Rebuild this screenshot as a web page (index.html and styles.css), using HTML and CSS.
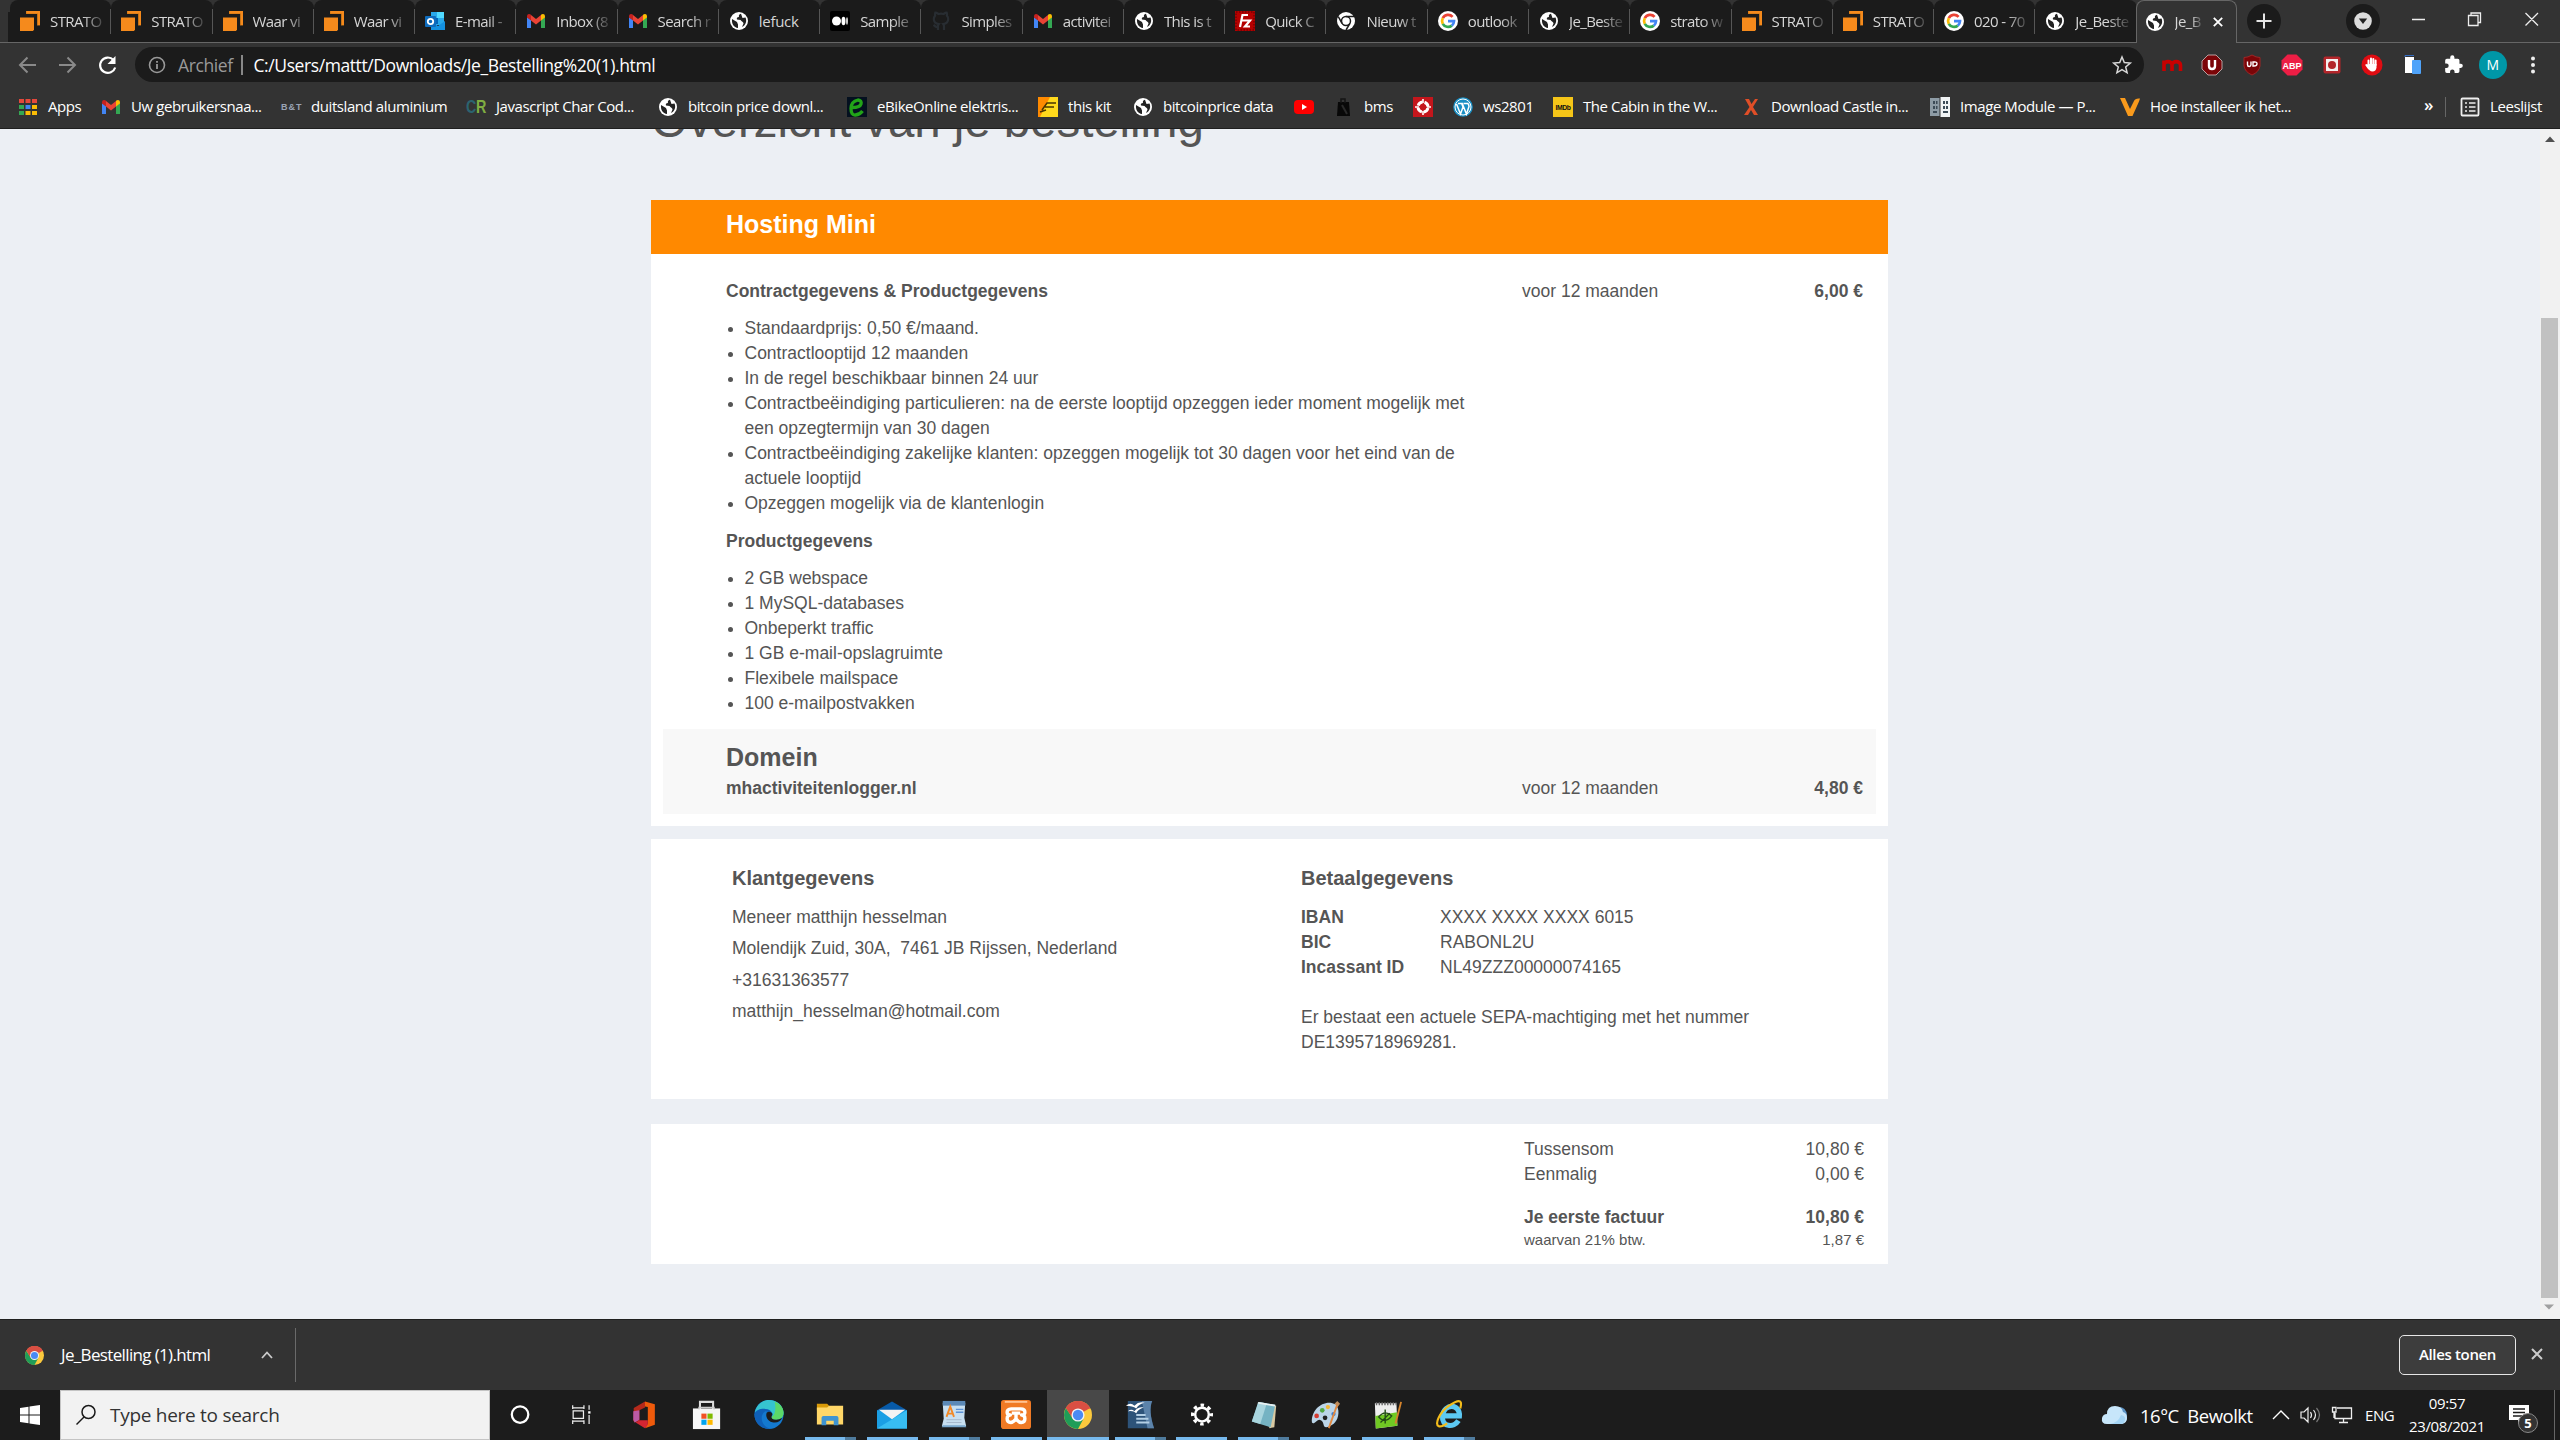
FILE: index.html
```html
<!DOCTYPE html>
<html lang="nl">
<head>
<meta charset="utf-8">
<title>Je_Bestelling (1).html</title>
<link rel="stylesheet" href="styles.css">
</head>
<body>
<svg class="defs" aria-hidden="true">
  <symbol id="strato" viewBox="0 0 20 20"><path d="M6 0H20V14.500H17V3H6z" fill="#c97414"/><path d="M6.500 0H20V14H18V2.500H6.500z" fill="#f58a1c"/><path d="M0 6.500H14V18.500L13 20H0z" fill="#f58a1c"/></symbol>
  <symbol id="gmail" viewBox="0 0 20 20"><path d="M1 6v11h4V9z" fill="#4285f4"/><path d="M15 9v8h4V6z" fill="#34a853"/><path d="M1 5.500c0-3 2.500-3 4-1.800V9.500L1 6.500z" fill="#c5221f"/><path d="M5 4l5 4 5-4v5.600l-5 3.900-5-3.900z" fill="#ea4335"/><path d="M15 3.700c1.500-1.200 4-1.200 4 1.800v1l-4 3z" fill="#fbbc04"/></symbol>
  <symbol id="globe" viewBox="0 0 20 20"><circle cx="10" cy="10" r="9" fill="#fff"/><path d="M3 8l5 3 1 2.500v3.500c-4-.5-6.500-4-6-9zM12 2.700c-2 .5-2.500 2-2 3.300-2 0-2.500 1-2 2.500l3.500.5c1 2 3 1.500 3 3.500L13 16c4-2 5-6 3.500-9.500L13.500 7z" fill="#222"/></symbol>
  <symbol id="google" viewBox="0 0 20 20"><circle cx="10" cy="10" r="10" fill="#fff"/><g fill="none" stroke-width="2.700"><path d="M14.600 5.800A6 6 0 0 0 4.800 7.200" stroke="#ea4335"/><path d="M4.800 7.200a6 6 0 0 0 0 5.600" stroke="#fbbc05"/><path d="M4.800 12.800a6 6 0 0 0 9 1.800" stroke="#34a853"/><path d="M13.800 14.600A6 6 0 0 0 16 10.200H10" stroke="#4285f4"/></g></symbol>
  <symbol id="outlook" viewBox="0 0 20 20"><rect x="6" y="1" width="13" height="13" fill="#28a8ea"/><path d="M12 1h7v6h-7z" fill="#50d9ff"/><path d="M6 7h7v6H6z" fill="#0364b8"/><path d="M6 10l7 5 7-5v9H6z" fill="#1490df"/><rect y="5" width="11" height="11" rx="1" fill="#0f6cbd"/><circle cx="5.500" cy="10.500" r="2.700" fill="none" stroke="#fff" stroke-width="1.800"/></symbol>
  <symbol id="medium" viewBox="0 0 20 20"><rect width="20" height="20" rx="2" fill="#000"/><circle cx="6.500" cy="10" r="4.500" fill="#fff"/><ellipse cx="13.500" cy="10" rx="2" ry="4.300" fill="#fff"/><ellipse cx="17" cy="10" rx=".8" ry="3.700" fill="#fff"/></symbol>
  <symbol id="github" viewBox="0 0 20 20"><path d="M7 19v-3c-3 .5-3.500-1.500-4.500-2.200M13 19v-4c0-1-.4-1.500-.8-2 3-.4 5-1.500 5-5 0-1.300-.5-2.500-1.300-3.300.2-1 .2-2-.2-3-1.200 0-2.300.7-3.200 1.300a10 10 0 0 0-5 0C6.600 2.400 5.500 1.700 4.300 1.700c-.4 1-.4 2-.2 3A5 5 0 0 0 2.800 8c0 3.500 2 4.600 5 5-.4.500-.8 1-.8 2v4" fill="none" stroke="#282d32" stroke-width="2.200"/></symbol>
  <symbol id="filezilla" viewBox="0 0 20 20"><rect width="20" height="20" fill="#b40000"/><rect x="1" y="1" width="18" height="18" fill="none" stroke="#700" stroke-width="1.500" stroke-dasharray="1.500 1.500"/><path d="M5 16L7.500 4H13M6 9.500h5M10.500 9.500H15L10 15.500h5" fill="none" stroke="#fff" stroke-width="2.200"/></symbol>
  <symbol id="chromemono" viewBox="0 0 20 20"><circle cx="10" cy="10" r="9" fill="#fff"/><circle cx="10" cy="10" r="4.500" fill="none" stroke="#1c1c1c" stroke-width="1.500"/><path d="M10 5.500h8M6 12.300L2.300 5.700M14 12.300L10 19" stroke="#1c1c1c" stroke-width="1.500"/></symbol>
  <symbol id="chrome" viewBox="0 0 20 20"><circle cx="10" cy="10" r="10" fill="#fbc93d"/><path d="M10 10L1.340 5A10 10 0 0 1 18.660 5z" fill="#d94f43"/><path d="M1.340 5A10 10 0 0 0 10 20L14 12.500 6 12z" fill="#1f9d58"/><path d="M10 5.300H18.800A10 10 0 0 0 1.340 5L6 12.300z" fill="#d94f43"/><circle cx="10" cy="10" r="4.700" fill="#f4f4f4"/><circle cx="10" cy="10" r="3.700" fill="#4a8af4"/></symbol>
</svg>

<header class="browser">
  <div class="tabs">
    <div class="tab"><svg><use href="#strato"/></svg><span>STRATO</span></div>
    <div class="tab"><svg><use href="#strato"/></svg><span>STRATO</span></div>
    <div class="tab"><svg><use href="#strato"/></svg><span>Waar vi</span></div>
    <div class="tab"><svg><use href="#strato"/></svg><span>Waar vi</span></div>
    <div class="tab"><svg><use href="#outlook"/></svg><span>E-mail -</span></div>
    <div class="tab"><svg><use href="#gmail"/></svg><span>Inbox (8</span></div>
    <div class="tab"><svg><use href="#gmail"/></svg><span>Search r</span></div>
    <div class="tab whole"><svg><use href="#globe"/></svg><span>lefuck</span></div>
    <div class="tab"><svg><use href="#medium"/></svg><span>Sample</span></div>
    <div class="tab"><svg><use href="#github"/></svg><span>Simples</span></div>
    <div class="tab"><svg><use href="#gmail"/></svg><span>activitei</span></div>
    <div class="tab"><svg><use href="#globe"/></svg><span>This is t</span></div>
    <div class="tab"><svg><use href="#filezilla"/></svg><span>Quick C</span></div>
    <div class="tab"><svg><use href="#chromemono"/></svg><span>Nieuw t</span></div>
    <div class="tab"><svg><use href="#google"/></svg><span>outlook</span></div>
    <div class="tab"><svg><use href="#globe"/></svg><span>Je_Beste</span></div>
    <div class="tab"><svg><use href="#google"/></svg><span>strato w</span></div>
    <div class="tab"><svg><use href="#strato"/></svg><span>STRATO</span></div>
    <div class="tab"><svg><use href="#strato"/></svg><span>STRATO</span></div>
    <div class="tab"><svg><use href="#google"/></svg><span>020 - 70</span></div>
    <div class="tab"><svg><use href="#globe"/></svg><span>Je_Beste</span></div>
    <div class="tab active"><svg><use href="#globe"/></svg><span>Je_B</span><svg class="tab-close" viewBox="0 0 10 10"><path d="M.8.8l8.400 8.400M9.200.8L.8 9.200" stroke="#fff" stroke-width="1.800"/></svg></div>
    <div class="strip-end">
      <svg class="round" viewBox="0 0 34 34"><circle cx="17" cy="17" r="17" fill="#1b1b1b"/><path d="M17 9.500v15M9.500 17h15" stroke="#e6e6e6" stroke-width="2"/></svg>
      <svg class="round menu-round" viewBox="0 0 34 34"><circle cx="17" cy="17" r="17" fill="#1b1b1b"/><circle cx="17" cy="17" r="8.800" fill="#dcdcdc"/><path d="M12.800 14.500h8.400L17 20z" fill="#222"/></svg>
      <svg class="wincontrols" viewBox="0 0 130 20"><g fill="none" stroke="#eee" stroke-width="1.300"><path d="M0 9.500h13M56.500 5.500h9.500v10h-9.500zM59 5.500V3h9.500v9.500H66M113.500 3l12.500 12.500M126 3l-12.500 12.500"/></g></svg>
    </div>
  </div>

  <div class="toolbar">
    <svg class="nav" viewBox="0 0 110 24"><g fill="none" stroke="#8a8a8a" stroke-width="2"><path d="M18 12H2M9.500 4.500L2 12l7.500 7.500M41 12h16M49.500 4.500L57 12l-7.500 7.500"/><path d="M95.500 7A7.700 7.700 0 1 0 97.200 14.500" stroke="#fff" stroke-width="2.200"/><path d="M97.500 3v8h-8z" fill="#fff" stroke="none"/></g></svg>
    <div class="omnibox">
      <svg class="info" viewBox="0 0 18 18"><circle cx="9" cy="9" r="7.500" fill="none" stroke="#999" stroke-width="1.600"/><path d="M9 8v5M9 5v1.700" stroke="#999" stroke-width="1.800"/></svg>
      <span class="scheme">Archief</span><i></i><span class="url">C:/Users/mattt/Downloads/Je_Bestelling%20(1).html</span>
      <svg class="star" viewBox="0 0 20 20"><path d="M10 2l2.300 5.500 6 .5-4.600 3.900 1.400 5.900L10 14.700l-5.100 3.100 1.400-5.900L1.700 8l6-.5z" fill="none" stroke="#d8d8d8" stroke-width="1.500"/></svg>
    </div>
    <div class="extensions">
      <svg viewBox="0 0 24 24"><path d="M4 18V7.500M4 12c0-4.500 8-4.500 8 0v6M12 12c0-4.500 8.500-4.500 8.500 0v6" fill="none" stroke="#c80000" stroke-width="3.600"/></svg>
      <svg viewBox="0 0 24 24"><path d="M8 2h8l6 6v8l-6 6H8l-6-6V8z" fill="#7b0508" stroke="#b8a0a0"/><path d="M9 7v6q0 3 3 3t3-3V7" fill="none" stroke="#fff" stroke-width="2.400"/></svg>
      <svg viewBox="0 0 24 24"><path d="M12 2q4 2.500 8 2.500V13q-1 6-8 9-7-3-8-9V4.500Q8 4.500 12 2z" fill="#7b0508" stroke="#a02525"/><path d="M7.500 8.500v3.200q0 1.800 1.700 1.800t1.800-1.800V8.500M13 9v4h1q3 0 3-2.200T14 9z" fill="none" stroke="#fff" stroke-width="1.400"/></svg>
      <svg viewBox="0 0 24 24"><path d="M7.500 1.500h9l6 6v9l-6 6h-9l-6-6v-9z" fill="#ed1e45"/><text x="12" y="15.500" text-anchor="middle" class="abp">ABP</text></svg>
      <svg viewBox="0 0 24 24"><rect x="3.500" y="3.500" width="17" height="17" rx="2" fill="#b3262b"/><rect x="6" y="6" width="12" height="12" fill="#f5f0f0"/><circle cx="12" cy="12" r="4" fill="#b3262b"/></svg>
      <svg viewBox="0 0 24 24"><circle cx="12" cy="12" r="10.500" fill="#e00c12"/><path d="M8.500 12V7.500M11 11V5.500M13.300 11V6M15.600 12V7.500M6.300 12l2.500 3.500" stroke="#fff" stroke-width="2" stroke-linecap="round"/><path d="M7.500 11h9v3.500q-.5 4-4 4t-5-5z" fill="#fff"/></svg>
      <svg viewBox="0 0 24 24"><path d="M4 4h9v16H4z" fill="#fff"/><path d="M4 4V2.500h9" stroke="#356cc0" fill="none"/><rect x="11" y="7" width="9" height="14" rx="1" fill="#4fa3fa"/></svg>
      <svg viewBox="0 0 24 24"><path d="M20.500 11H19V7a2 2 0 0 0-2-2h-4V3.500a2.500 2.500 0 0 0-5 0V5H4a2 2 0 0 0-2 2v3.800h1.500a2.700 2.700 0 0 1 0 5.400H2V20a2 2 0 0 0 2 2h3.800v-1.500a2.700 2.700 0 0 1 5.400 0V22H17a2 2 0 0 0 2-2v-4h1.500a2.500 2.500 0 0 0 0-5z" fill="#fff" transform="translate(2.500 1.500) scale(.84)"/></svg>
      <b class="avatar">M</b>
      <svg viewBox="0 0 24 24"><g fill="#eee"><circle cx="12" cy="5.500" r="2"/><circle cx="12" cy="12" r="2"/><circle cx="12" cy="18.500" r="2"/></g></svg>
    </div>
  </div>

  <nav class="bookmarks">
    <a class="w33"><svg viewBox="0 0 20 20"><g><path d="M1 2h5v4H1zM7.500 2h5v4h-5zM14 2h5v4h-5z" fill="#e5483b"/><path d="M1 8h5v4H1z" fill="#34a853"/><path d="M7.500 8h5v4h-5z" fill="#4285f4"/><path d="M14 8h5v4h-5zM14 14h5v4h-5zM7.500 14h5v4h-5z" fill="#fbbc05"/><path d="M1 14h5v4H1z" fill="#34a853"/></g></svg><span>Apps</span></a>
    <a class="w130"><svg><use href="#gmail"/></svg><span>Uw gebruikersnaa...</span></a>
    <a class="w135"><svg viewBox="0 0 20 20"><text x="0" y="13" class="bt" textLength="20">B&amp;T</text></svg><span>duitsland aluminium</span></a>
    <a class="w142"><svg viewBox="0 0 20 20"><text x="0" y="16" class="cr" textLength="20" lengthAdjust="spacingAndGlyphs"><tspan fill="#2b6470">C</tspan><tspan fill="#7fae42">R</tspan></text></svg><span>Javascript Char Cod...</span></a>
    <a class="w139"><svg><use href="#globe"/></svg><span>bitcoin price downl...</span></a>
    <a class="w141"><svg viewBox="0 0 20 20"><rect width="20" height="20" fill="#04101f"/><path d="M5 10.500q8 0 9-3.500t-3-4Q4 4.500 4 11.500t4.500 6.500 7-4" fill="none" stroke="#22a318" stroke-width="3.300"/></svg><span>eBikeOnline elektris...</span></a>
    <a class="w45"><svg viewBox="0 0 20 20"><rect width="20" height="20" fill="#ff8a00"/><path d="M2 20L12 0h8v20z" fill="#ffd91c"/><path d="M4 13l5-7h9M7 10h9M2 15l6-2" fill="none" stroke="#4a3500" stroke-width="1.500"/></svg><span>this kit</span></a>
    <a class="w111"><svg><use href="#globe"/></svg><span>bitcoinprice data</span></a>
    <a><svg viewBox="0 0 20 20"><rect y="3" width="20" height="14" rx="4" fill="#f00"/><path d="M8 7l5 3-5 3z" fill="#fff"/></svg></a>
    <a class="w29"><svg viewBox="0 0 20 20"><path d="M4 5h11l1 14H3z" fill="#080808"/><path d="M7 6V2h4v4" fill="none" stroke="#151515" stroke-width="1.500"/><path d="M8 8l5 9" stroke="#292929" stroke-width="2"/></svg><span>bms</span></a>
    <a><svg viewBox="0 0 20 20"><rect width="20" height="20" fill="#c4161c"/><circle cx="10" cy="10" r="5" fill="none" stroke="#fff" stroke-width="3" stroke-dasharray="5.800 2.050" stroke-dashoffset="-1"/><path d="M10 2v4M10 14v4M2 10h4M14 10h4" stroke="#fff" stroke-width="1.600"/></svg></a>
    <a class="w50"><svg viewBox="0 0 20 20"><circle cx="10" cy="10" r="9.800" fill="#1b8fc4"/><circle cx="10" cy="10" r="8" fill="none" stroke="#fff"/><path d="M3.500 7l4 10 2.500-7-1.500-4M5 6.500h4.500M9 6l4.500 11L16 9.500q0-2-1.500-3.500M10.500 6.500H15" fill="none" stroke="#fff" stroke-width="1.500"/></svg><span>ws2801</span></a>
    <a class="w138"><svg viewBox="0 0 20 20"><rect width="20" height="20" fill="#f5c518"/><text x="2.500" y="13" class="imdb" textLength="15" lengthAdjust="spacingAndGlyphs">IMDb</text></svg><span>The Cabin in the W...</span></a>
    <a class="w139"><svg viewBox="0 0 20 20"><path d="M4 2h4l2.500 5L14 2h3l-5 8 5 8h-4l-3-5-3 5H3l5.500-8z" fill="#e04e27"/></svg><span>Download Castle in...</span></a>
    <a class="w140"><svg viewBox="0 0 20 20"><path d="M0 1h9.500v18H0z" fill="#8d9ba5"/><path d="M10.500 0H20v20h-9.500z" fill="#f0f3f4"/><path d="M3 4h2v3H3zM3 9h2v3H3zM6 4h1.500v3H6zM6 9h1.500v3H6zM13 4h2v3h-2zM16 4h2v3h-2zM13 9h2v3h-2zM16 9h2v3h-2zM3 14h4v2H3zM13 14h5v2h-5z" fill="#3c4b57"/></svg><span>Image Module — P...</span></a>
    <a class="w143"><svg viewBox="0 0 20 20"><path d="M0 1h5l5 11 4-8q1-3 6-2.500l-1 3L12.500 19H8z" fill="#f99a1c"/></svg><span>Hoe installeer ik het...</span></a>
    <div class="reading"><b>»</b><i></i><svg viewBox="0 0 20 20"><rect x="1.500" y="1.500" width="17" height="17" rx="1" fill="none" stroke="#eee" stroke-width="1.800"/><path d="M5 6h2M9 6h6.500M5 10h2M9 10h6.500M5 14h2M9 14h6.500" stroke="#eee" stroke-width="1.600"/></svg><span>Leeslijst</span></div>
  </nav>
</header>

<div class="viewport">
  <main>
    <h1>Overzicht van je bestelling</h1>
    <section class="card product">
      <h2>Hosting Mini</h2>
      <div class="line">
        <div class="details">
          <h4>Contractgegevens &amp; Productgegevens</h4>
          <ul>
            <li>Standaardprijs: 0,50 €/maand.</li>
            <li>Contractlooptijd 12 maanden</li>
            <li>In de regel beschikbaar binnen 24 uur</li>
            <li>Contractbeëindiging particulieren: na de eerste looptijd opzeggen ieder moment mogelijk met een opzegtermijn van 30 dagen</li>
            <li>Contractbeëindiging zakelijke klanten: opzeggen mogelijk tot 30 dagen voor het eind van de actuele looptijd</li>
            <li>Opzeggen mogelijk via de klantenlogin</li>
          </ul>
          <h4>Productgegevens</h4>
          <ul>
            <li>2 GB webspace</li>
            <li>1 MySQL-databases</li>
            <li>Onbeperkt traffic</li>
            <li>1 GB e-mail-opslagruimte</li>
            <li>Flexibele mailspace</li>
            <li>100 e-mailpostvakken</li>
          </ul>
        </div>
        <span>voor 12 maanden</span>
        <b>6,00 €</b>
      </div>
      <div class="domain">
        <h3>Domein</h3>
        <div class="line"><b class="name">mhactiviteitenlogger.nl</b><span>voor 12 maanden</span><b>4,80 €</b></div>
      </div>
    </section>

    <section class="card customer">
      <div class="person">
        <h3>Klantgegevens</h3>
        <p>Meneer matthijn hesselman</p>
        <p>Molendijk Zuid, 30A,&nbsp; 7461 JB Rijssen, Nederland</p>
        <p>+31631363577</p>
        <p>matthijn_hesselman@hotmail.com</p>
      </div>
      <div class="payment">
        <h3>Betaalgegevens</h3>
        <dl>
          <dt>IBAN</dt><dd>XXXX XXXX XXXX 6015</dd>
          <dt>BIC</dt><dd>RABONL2U</dd>
          <dt>Incassant ID</dt><dd>NL49ZZZ00000074165</dd>
        </dl>
        <p>Er bestaat een actuele SEPA-machtiging met het nummer DE1395718969281.</p>
      </div>
    </section>

    <section class="card totals">
      <div><span>Tussensom</span><span>10,80 €</span></div>
      <div><span>Eenmalig</span><span>0,00 €</span></div>
      <div class="total"><b>Je eerste factuur</b><b>10,80 €</b></div>
      <div class="vat"><span>waarvan 21% btw.</span><span>1,87 €</span></div>
    </section>
  </main>
  <div class="scrollbar">
    <svg viewBox="0 0 20 20"><path d="M5 13h10l-5-5.500z" fill="#505050"/></svg>
    <div class="thumb"></div>
    <svg viewBox="0 0 20 20"><path d="M4 6.500h10L9 11.500z" fill="#a0a0a0"/></svg>
  </div>
</div>

<footer class="shelf">
  <div class="download">
    <svg class="file"><use href="#chrome"/></svg>
    <span>Je_Bestelling (1).html</span>
    <svg class="chev" viewBox="0 0 12 8"><path d="M1 7l5-5.500L11 7" fill="none" stroke="#ccc" stroke-width="1.800"/></svg>
  </div>
  <button>Alles tonen</button>
  <svg class="close" viewBox="0 0 12 12"><path d="M1 1l10 10M11 1L1 11" stroke="#ccc" stroke-width="2"/></svg>
</footer>

<div class="taskbar">
  <svg class="start" viewBox="0 0 20 20"><path d="M0 3l8.500-1.300v7.800H0zM9.500 1.500L20 0v9.500H9.500zM0 10.500h8.500v7.800L0 17zM9.500 10.500H20V20L9.500 18.500z" fill="#fff"/></svg>
  <div class="search">
    <svg viewBox="0 0 22 22"><circle cx="13.500" cy="8" r="6.500" fill="none" stroke="#1a1a1a" stroke-width="1.500"/><path d="M9 13L1.500 20.500" stroke="#1a1a1a" stroke-width="1.500"/></svg>
    <span>Type here to search</span>
  </div>
  <div class="apps">
    <div><svg viewBox="0 0 32 32"><circle cx="15" cy="15.500" r="8.800" fill="none" stroke="#fff" stroke-width="2.400"/></svg></div>
    <div><svg viewBox="0 0 32 32"><path d="M5 9.500V5.500M5 8.500h12M17 9.500V5.500M5.500 11.500h11v8h-11zM5 25.500v-4M5 22.500h12M17 25.500v-4M22.500 5.500v5M22.500 16v9.500" fill="none" stroke="#eee" stroke-width="1.300"/><path d="M21.500 12h2.500v2.500h-2.500z" fill="#fff"/></svg></div>
    <div><svg viewBox="0 0 32 32"><path d="M4 8.500L16 1.500v6.500l-6 3v11L5 24l-1.500-2z" fill="#b5291b"/><path d="M3.500 12v9l1.500 3 5-3V11z" fill="#bb5aa5"/><path d="M16 1.500L26.500 4.500v22L16 30l3-5V7.500l-3-.5z" fill="#ee5a0b"/><path d="M6 24l4-2.500h9V26L16 30z" fill="#d42532"/></svg></div>
    <div><svg viewBox="0 0 32 32"><path d="M8.500 9.500V2h14v7.500" fill="none" stroke="#ddd" stroke-width="2.200"/><path d="M1 9h29v22H1z" fill="#f6f6f6"/><path d="M7.500 10V8h16v2" fill="none" stroke="#ccc" stroke-width="1.500"/><path d="M10 14.500h5.500V20H10z" fill="#f25022"/><path d="M16.500 14.500H22V20h-5.500z" fill="#7fba00"/><path d="M10 21h5.500v5.500H10z" fill="#00a4ef"/><path d="M16.500 21H22v5.500h-5.500z" fill="#ffb900"/></svg></div>
    <div><svg viewBox="0 0 32 32"><circle cx="16" cy="15.500" r="15.500" fill="#1479cf"/><path d="M1 13C2.500 5 9 0 16 0c9 0 15.500 6.500 15.500 13.500 0 5.500-4 7.500-8 7.500-6 0-5-2.500-4-4 1-3.500-2-7.500-7.500-7.500C7 9.500 3 10 1 13z" fill="#36c4d0"/><path d="M22 1.500c6 2.500 9.500 7 9.500 12 0 5.500-4 7.500-8 7.500-4 0-5.500-1.500-4.500-3.500 3-1 5-7 3-16z" fill="#5bd868"/><path d="M12 12c-7 5-4 17 6.500 18.700C8 32 .5 24 .5 15.500 2 11 7 9 12 9.500c4 .3 6.500 2.500 7.500 5-2-1.500-5-2.500-7.500-2.500z" fill="#0f60b8"/><path d="M13.500 13.500c2-2 5-1 6 1 .3 1-.2 2-.8 2.800-.5 2.200 1 3.700 4.800 3.700 2.500 0 4.500-.7 6.500-2-1.500 4-6 6-10.500 4.700-5-1.500-7.500-6.200-6-10.200z" fill="#1c1c1c"/></svg></div>
    <div class="open many"><svg viewBox="0 0 32 32"><path d="M2 4h11l2 2v5H2z" fill="#d99a08"/><path d="M2 8h11l2-2h15v20H2z" fill="#ffd768"/><path d="M7 27V19q0-2 2-2h14q2 0 2 2v8h-5v-5h-8v5z" fill="#3f94d1"/></svg></div>
    <div class="open"><svg viewBox="0 0 32 32"><path d="M0 11L16 1.500 32 11v3H0z" fill="#075aa8"/><path d="M0 11h32v19.500H0z" fill="#1b9fe4"/><path d="M2 10.500h28L16 20.500z" fill="#f3f3f3"/><path d="M0 30.500L32 11v19.500z" fill="#38bdf2"/></svg></div>
    <div class="open many"><svg viewBox="0 0 32 32"><path d="M4 3h24l-1 16 2 9H3l2-8z" fill="#c7dff1"/><path d="M4 1h24v5H4z" fill="#5b89b7"/><path d="M3 29h26l-1-2H4z" fill="#78a7cd"/><path d="M8 18l4-11 4 11M9.500 14.500h5" fill="none" stroke="#f28927" stroke-width="2"/><path d="M18 10h8M18 13h8" stroke="#5c92d6" stroke-width="1.500"/><path d="M8 21h16M8 24h16" stroke="#a5b9cc"/></svg></div>
    <div class="open"><svg viewBox="0 0 32 32"><rect width="32" height="31" rx="3" fill="#f07a25"/><path d="M4 1h24v2H4z" fill="#ffc291"/><path d="M11 9.500h10q4.500 0 4.500 3.500T22 16q3.500 0 3.500 4t-4 4q-2.500 0-5.500-4-3 4-5.500 4-4 0-4-4t3.500-4q-3.500 0-3.500-3T11 9.500zM11.500 14h9M16 14v6" fill="none" stroke="#fff" stroke-width="3.600" stroke-linejoin="round"/></svg></div>
    <div class="open current"><svg class="big-chrome"><use href="#chrome"/></svg></div>
    <div class="open many"><svg viewBox="0 0 32 32"><path d="M3 1h26c-3 7-2 17 2 29H3z" fill="#2d5379"/><path d="M18 1h11c-3 7-2 17 2 29h-7z" fill="#5c83aa"/><path d="M1 6q5-4 9 0 5-5 11-3-6 1-9 6-4-3-11-3zM3 12q4-3 7 0 4-5 10-4-6 2-8 6-3-3-9-2z" fill="#fff"/><path d="M12 16h10M12 20h13M12 24h14" stroke="#b3cfe5" stroke-width="2"/></svg></div>
    <div class="open"><svg viewBox="0 0 32 32"><circle cx="16" cy="15.500" r="7.300" fill="none" stroke="#fff" stroke-width="2.600"/><circle cx="16" cy="15.500" r="10" fill="none" stroke="#fff" stroke-width="3.500" stroke-dasharray="3.700 4.154" stroke-dashoffset="1.850"/></svg></div>
    <div class="open many"><svg viewBox="0 0 32 32"><path d="M9 3l20 3-2 23-5 1z" fill="#d8c9a2"/><path d="M10 2l18 3-5 24L3 23z" fill="#75b3c3"/><path d="M10 2l9 1.500-7 22L3 23z" fill="#a9d5de"/><path d="M10 2l18 3v2L10 4z" fill="#e9f1f2"/></svg></div>
    <div class="open"><svg viewBox="0 0 32 32"><path d="M24 5l4-4 3 3-3 4z" fill="#bd8c5d"/><path d="M1 24C0 12 10 2 21 3c8 1 10 9 7 17-3 7-12 11-14 8-1-3-1-6-5-7-3 0-6 6-8 3z" fill="#bbd5e8"/><circle cx="12" cy="11" r="2.500" fill="#53a943"/><circle cx="18" cy="7.500" r="2.300" fill="#f1b738"/><circle cx="6" cy="17" r="2.500" fill="#d43c32"/><circle cx="15" cy="19" r="2.500" fill="#222"/><circle cx="24" cy="15" r="2.300" fill="#357dd3"/><path d="M28 5l-9 25" stroke="#e08841" stroke-width="2"/></svg></div>
    <div class="open"><svg viewBox="0 0 32 32"><path d="M2 3.500h23l1 24-23 3z" fill="#eee"/><path d="M2.500 17l23-4 .5 14.500-23 3z" fill="#70c923"/><path d="M3 4h22" stroke="#666" stroke-width="3" stroke-dasharray="1.500 1.500"/><path d="M6 18q7-8 14-1-7 9-14 1zM13 10v15M8 24l10-10" fill="none" stroke="#244d16" stroke-width="1.500"/><path d="M30 2l-6 23" stroke="#d5832c" stroke-width="2"/></svg></div>
    <div class="open many"><svg viewBox="0 0 32 32"><path d="M8 17h18c1-13-16-14-18 0-1 12 12 13 17 5" fill="none" stroke="#5cc9f3" stroke-width="5.500"/><path d="M27 9C30-2 24 0 15 6 5 13-1 26 4 28c3 1 6-1 9-3" fill="none" stroke="#f3bc1b" stroke-width="2.300"/></svg></div>
  </div>
  <div class="tray">
    <svg class="cloud" viewBox="0 0 28 20"><path d="M16 2q9-1 10 8 1 8-6 8z" fill="#5d94c6"/><path d="M6 19q-6 0-5-6 1-4 5-4 0-8 8-8 7 0 8 6 4 1 4 6t-5 6z" fill="#c7e6fa"/><path d="M9 19q8-1 11-9 5 1 4 5t-4 4z" fill="#a5d5f5"/></svg>
    <span class="weather">16°C&nbsp; Bewolkt</span>
    <svg class="up" viewBox="0 0 18 10"><path d="M1 9l8-8 8 8" fill="none" stroke="#fff" stroke-width="1.400"/></svg>
    <svg class="speaker" viewBox="0 0 22 18"><path d="M1 6h3l4-4v14l-4-4H1zM10.500 6q2 3 0 6M13.500 4q4 5 0 10" fill="none" stroke="#eee" stroke-width="1.200"/><path d="M16.500 2q6 7 0 14" fill="none" stroke="#777" stroke-width="1.200"/></svg>
    <svg class="net" viewBox="0 0 22 18"><path d="M6 2h14.500v10.500H4V7M8 16.500h9M12.500 12.500v4M1.500 1.500H5V6H1.500zM3 6v6" fill="none" stroke="#eee" stroke-width="1.300"/></svg>
    <span class="lang">ENG</span>
    <div class="clock"><span>09:57</span><span>23/08/2021</span></div>
    <div class="notes"><svg viewBox="0 0 20 20"><path d="M0 0h20v15h-7l-4 4v-4H0z" fill="#fff"/><path d="M4 4h12M4 7.500h12M4 11h9" stroke="#1c1c1c" stroke-width="1.300"/></svg><b>5</b></div>
    <i></i>
  </div>
</div>
</body>
</html>
```
FILE: styles.css
```css
* { box-sizing: border-box; }
body { margin: 0; width: 2560px; height: 1440px; overflow: hidden; display: flex; flex-direction: column; font-family: "Open Sans", "Noto Sans", sans-serif; background: #333; color: #fff; }
.defs { position: absolute; width: 0; height: 0; }
svg { display: block; flex: none; overflow: visible; }

/* browser chrome */
.browser { height: 129px; flex: none; border-bottom: 1px solid #1f1f1f; }
.tabs { height: 43px; padding-left: 10px; display: flex; background: linear-gradient(#333 12px, #1b1b1b 12px) 8px 0 / 2128px 100% no-repeat, #333; border-bottom: 1px solid #666; }
.tab { width: 101.280px; flex: none; height: 42px; padding-left: 10px; display: flex; align-items: center; background: linear-gradient(#565656, #565656) 100% 9px / 1px 25px no-repeat, #1b1b1b; border-radius: 8px 8px 0 0; }
.tab svg { width: 20px; height: 20px; }
.tab span { width: 54px; margin-left: 10px; padding-bottom: 1px; overflow: hidden; white-space: nowrap; font-size: 15px; letter-spacing: -.6px; color: #d6d6d6; -webkit-mask-image: linear-gradient(90deg, #000 60%, rgba(0,0,0,.15)); mask-image: linear-gradient(90deg, #000 60%, rgba(0,0,0,.15)); }
.tab.whole span { -webkit-mask-image: none; mask-image: none; letter-spacing: -.3px; }
.tab.active { width: 101px; height: 43px; margin-left: -1px; background: #333; border: 1px solid #666; border-bottom: 0; padding: 0 0 1px 8px; }
.tab.active span { width: 27px; }
.tab .tab-close { width: 10px; height: 10px; margin-left: 11px; }
.strip-end { flex: 1; display: flex; align-items: center; padding-left: 10px; }
.round { width: 34px; height: 34px; }
.menu-round { margin-left: 65px; }
.wincontrols { width: 130px; height: 20px; margin: -3px 0 0 32px; }

.toolbar { height: 43px; display: flex; align-items: center; padding-left: 18px; }
.nav { width: 110px; height: 24px; }
.omnibox { margin-left: 7px; width: 2009px; height: 35px; border-radius: 18px; background: #1b1b1b; display: flex; align-items: center; padding: 0 12px 0 13px; font-size: 17.500px; white-space: nowrap; }
.info { width: 18px; height: 18px; }
.scheme { width: 55px; margin-left: 12px; color: #999; letter-spacing: -.4px; }
.omnibox i { width: 1.500px; height: 20px; background: #888; margin: 0 11px 0 8px; }
.url { letter-spacing: -.41px; }
.star { width: 20px; height: 20px; margin-left: auto; }
.extensions { display: flex; gap: 16.100px; margin-left: 16px; align-items: center; }
.extensions svg { width: 24px; height: 24px; }
.abp { font: bold 9px "Liberation Sans", sans-serif; fill: #fff; }
.avatar { width: 28px; height: 28px; margin: 0 -2px; border-radius: 50%; background: #0097a7; font-size: 14px; font-weight: 400; line-height: 28px; text-align: center; }

.bookmarks { height: 41px; display: flex; align-items: center; gap: 20px; padding: 0 18px; font-size: 15px; letter-spacing: -.42px; white-space: nowrap; }
.bookmarks a { display: flex; align-items: center; gap: 10px; }
.bookmarks span { padding-bottom: 2px; }
.bookmarks svg { width: 20px; height: 20px; }
.bt { font: bold 9px "Liberation Sans", sans-serif; fill: #9aa3b3; }
.cr { font: bold 18px "Liberation Sans", sans-serif; }
.imdb { font: bold 7px "Liberation Sans", sans-serif; fill: #111; }
.w29 span { width: 29px; } .w33 span { width: 33px; } .w45 span { width: 45px; } .w50 span { width: 50px; }
.w111 span { width: 111px; } .w130 span { width: 130px; } .w135 span { width: 135px; } .w138 span { width: 138px; }
.w139 span { width: 139px; } .w140 span { width: 140px; } .w141 span { width: 141px; } .w142 span { width: 142px; } .w143 span { width: 143px; }
.reading { margin-left: auto; display: flex; align-items: center; }
.reading b { font-size: 17px; line-height: 20px; padding-bottom: 3px; font-weight: 600; }
.reading i { width: 1px; height: 20px; background: #666; margin: 0 14px 0 12px; }
.reading span { margin-left: 10px; width: 52px; }

/* order page */
.viewport { height: 1190px; flex: none; display: flex; overflow: hidden; background: #eceff4; color: #555; font: 17.500px/25px "Liberation Sans", Arial, sans-serif; }
main { width: 1237px; margin-left: 651px; }
h1, h2, h3, h4, p, ul, dl, dd { margin: 0; }
h1 { font-size: 47.500px; letter-spacing: -.06px; line-height: 54px; font-weight: 400; margin-top: -35px; height: 106px; }
.card { background: #fff; }
.product { height: 626px; }
.product h2 { height: 54px; padding: 9px 75px; background: #ff8900; color: #fff; font-size: 25px; line-height: 31px; }
.line { display: grid; grid-template-columns: 796px 200px 141px; }
.line > b:last-child { text-align: right; }
.product > .line { padding: 25px 0 0 75px; height: 475px; }
h4 { font-size: 17.500px; }
ul { list-style: none; padding: 0 0 0 18.500px; margin: 11.500px 0 13.500px; width: 750px; }
li { position: relative; }
li::before { content: ""; position: absolute; left: -17px; top: 11px; width: 5px; height: 5px; border-radius: 50%; background: #555; }
.domain { height: 85px; margin: 0 12px; padding: 13px 0 0 63px; background: #f8f8f8; }
.domain h3 { font-size: 25px; line-height: 30px; margin-bottom: 4px; }
.customer { height: 260px; margin-top: 13px; padding: 27px 0 0 81px; display: grid; grid-template-columns: 569px 460px; }
.customer h3 { font-size: 20px; line-height: 25px; margin-bottom: 13.500px; }
.person p { margin-bottom: 6.500px; }
dl { display: grid; grid-template-columns: 139px 1fr; margin-bottom: 25px; }
dt { font-weight: 700; }
.totals { height: 140px; margin-top: 25px; padding: 12.500px 24px 0 873px; }
.totals div { display: flex; justify-content: space-between; }
.totals .total { margin-top: 18px; }
.totals .vat { font-size: 15px; line-height: 20px; margin-top: 0; }
.scrollbar { margin-left: auto; width: 20px; background: #f1f1f1; display: flex; flex-direction: column; }
.scrollbar svg { width: 20px; height: 20px; }
.thumb { width: 17px; height: 980px; margin: 169px 0 0 1px; background: #c1c1c1; }

/* download shelf */
.shelf { height: 71px; flex: none; border-top: 1px solid #1f1f1f; display: flex; align-items: center; background: #333; }
.download { width: 296px; height: 54px; border-right: 1px solid #6a6a6a; display: flex; align-items: center; padding-left: 25px; font-size: 17px; letter-spacing: -.65px; white-space: nowrap; }
.file { width: 19px; height: 19px; }
.download span { margin-left: 17px; width: 150px; padding-bottom: 1px; }
.chev { width: 12px; height: 8px; margin-left: 50px; }
.shelf button { margin-left: auto; width: 117px; height: 40px; padding: 0 0 3px; border: 1px solid #e6e6e6; border-radius: 5px; background: #3d3d3d; color: #fff; font: 600 15px "Open Sans", sans-serif; letter-spacing: -.35px; }
.close { width: 12px; height: 12px; margin: 0 17px 2px 15px; }

/* taskbar */
.taskbar { height: 50px; flex: none; display: flex; align-items: center; background: #1c1c1c; }
.start { width: 20px; height: 20px; margin: 0 20px; }
.search { width: 430px; height: 50px; background: #f2f2f2; border: 1px solid #c4c4c4; display: flex; align-items: center; color: #333; font-size: 19px; letter-spacing: -.28px; }
.search svg { width: 22px; height: 22px; margin: 0 13px 0 14px; }
.apps { display: flex; height: 50px; }
.apps div { width: 61.920px; height: 50px; display: flex; justify-content: center; align-items: center; background: linear-gradient(#76b9ed, #76b9ed) 50% 100% / 0 3px no-repeat; }
.apps .open { background-size: 51px 3px; }
.apps .many { background: linear-gradient(90deg, #76b9ed 40px, #4f7b9d 40px) 50% 100% / 51px 3px no-repeat; }
.apps .current { background: linear-gradient(#484848 47px, #76b9ed 47px); }
.apps svg { width: 30px; height: 30px; }
.apps .big-chrome { width: 28px; height: 28px; }
.tray { margin-left: auto; display: flex; align-items: center; height: 50px; white-space: nowrap; }
.cloud { width: 28px; height: 20px; }
.weather { width: 112px; margin-left: 11px; font-size: 18.500px; letter-spacing: -.5px; }
.up { width: 18px; height: 10px; margin-left: 20px; }
.speaker { width: 22px; height: 18px; margin-left: 10px; }
.net { width: 22px; height: 18px; margin-left: 9px; }
.lang { width: 30px; margin-left: 12px; font-size: 15px; letter-spacing: -.4px; }
.clock { width: 80px; margin-left: 12px; text-align: center; font-size: 15px; letter-spacing: -.35px; line-height: 23px; display: flex; flex-direction: column; }
.notes { position: relative; width: 20px; margin-left: 22px; }
.notes svg { width: 20px; height: 20px; }
.notes b { position: absolute; left: 9px; top: 8px; width: 20px; height: 20px; border: 1px solid #888; border-radius: 50%; background: #333; font-size: 13px; line-height: 18px; text-align: center; }
.tray i { width: 1px; height: 50px; margin: 0 5px 0 25px; background: #666; }
```
